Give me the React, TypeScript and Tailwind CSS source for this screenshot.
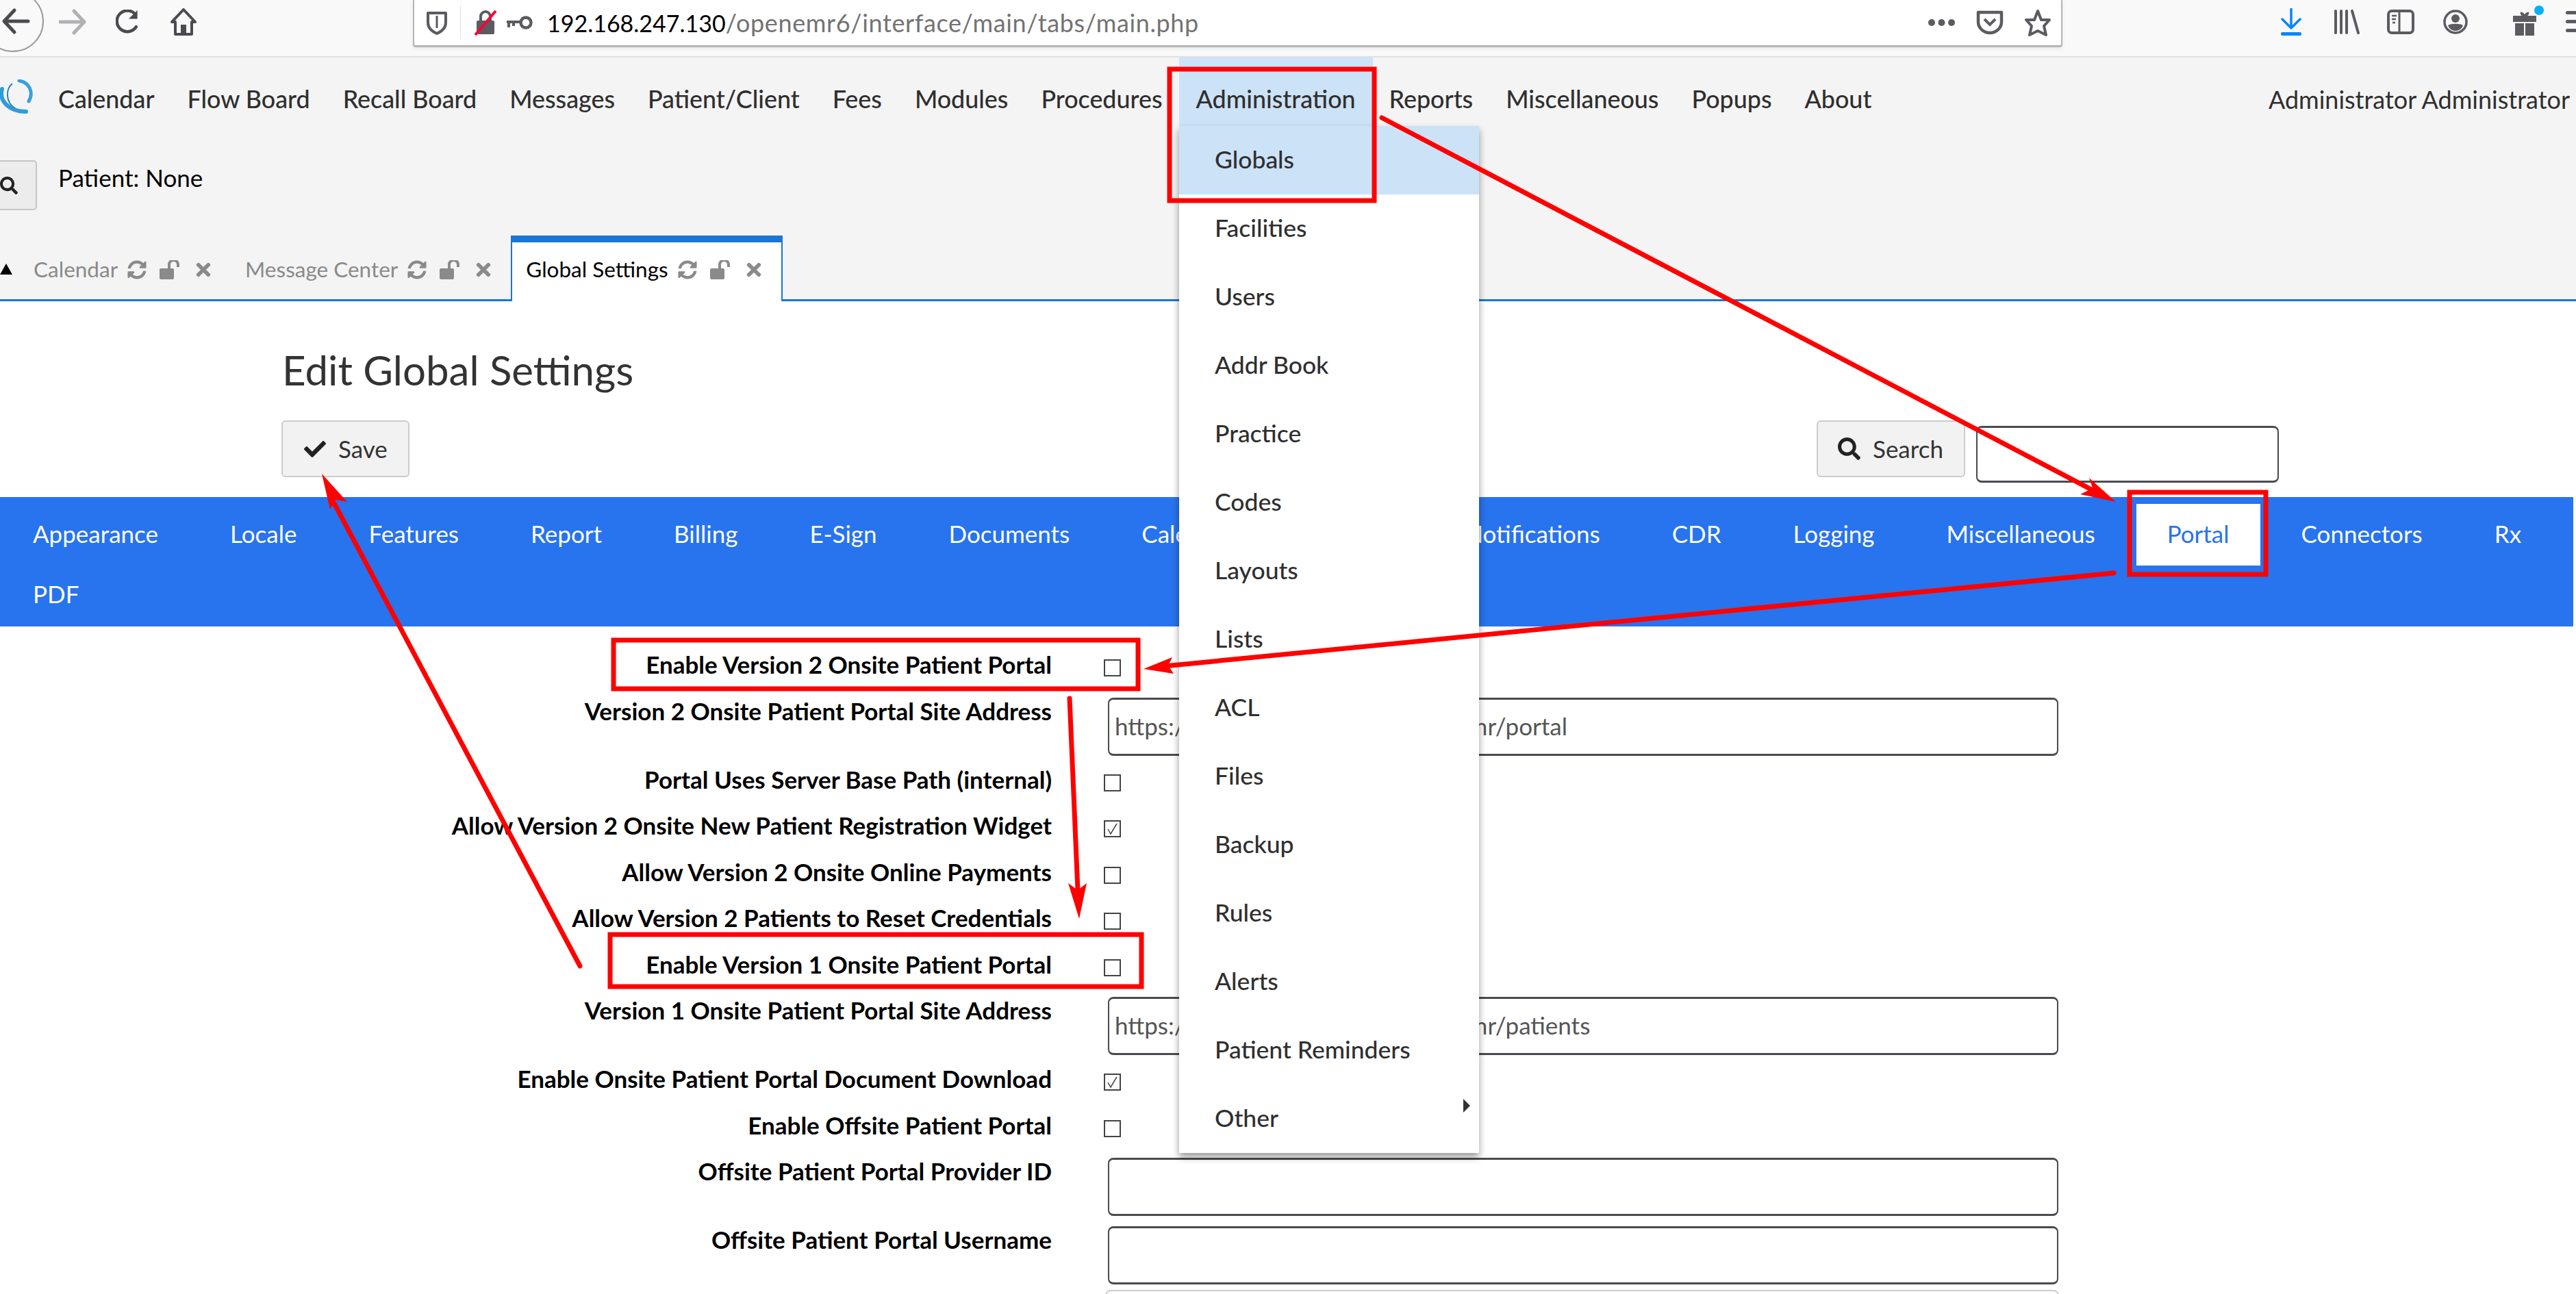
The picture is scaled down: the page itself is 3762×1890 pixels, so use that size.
import { FaCheck, FaSearch, FaSyncAlt, FaTimes } from "react-icons/fa";

const navItems = ["Calendar", "Flow Board", "Recall Board", "Messages", "Patient/Client", "Fees", "Modules", "Procedures"];
const navItemsAfter = ["Reports", "Miscellaneous", "Popups", "About"];
const menuItems = ["Globals", "Facilities", "Users", "Addr Book", "Practice", "Codes", "Layouts", "Lists", "ACL", "Files", "Backup", "Rules", "Alerts", "Patient Reminders", "Other"];
const settingTabs = ["Appearance", "Locale", "Features", "Report", "Billing", "E-Sign", "Documents", "Calendar", "Security", "Notifications", "CDR", "Logging", "Miscellaneous", "Portal", "Connectors", "Rx", "PDF"];

const Icon = ({ className, children, box = "0 0 40 40" }: { className: string; children: React.ReactNode; box?: string }) => (
  <svg viewBox={box} className={className} fill="none">
    {children}
  </svg>
);

const BrowserBar = () => (
  <div className="relative flex h-[84px] items-start overflow-hidden border-b-2 border-[#e0e0e2] bg-[#f9f9fa]">
    {/* back button is cut by the left edge */}
    <div className="ml-[-26px] mt-[-14px] flex h-[90px] w-[90px] shrink-0 items-center justify-center rounded-full border-2 border-[#9a9a9c] pl-[8px]">
      <Icon className="h-[40px] w-[42px]">
        <path d="M38 20H4M18 4 3 20l15 16" stroke="#4a4a4f" strokeWidth="5" strokeLinecap="round" strokeLinejoin="round" />
      </Icon>
    </div>
    <Icon className="ml-[22px] mt-[12px] h-[40px] w-[40px] shrink-0">
      <path d="M2 20h34M22 4l15 16-15 16" stroke="#b1b1b3" strokeWidth="5" strokeLinecap="round" strokeLinejoin="round" />
    </Icon>
    <Icon className="ml-[43px] mt-[14px] h-[36px] w-[38px] shrink-0">
      <path d="M31 8A17 17 0 1 0 32 28" stroke="#4a4a4f" strokeWidth="5" strokeLinecap="round" />
      <path d="M34 1v14H20z" fill="#4a4a4f" />
    </Icon>
    <Icon className="ml-[41px] mt-[12px] h-[40px] w-[40px] shrink-0">
      <path d="M20 2 3 20h5v18h24V20h5z" stroke="#4a4a4f" strokeWidth="4" strokeLinejoin="round" />
      <rect x="16" y="24" width="8" height="14" fill="#4a4a4f" />
    </Icon>
    <div className="ml-[315px] flex h-[69px] flex-[0_0_2409px] items-center rounded-b-[4px] border-x-2 border-b-[3px] border-[#b5b5b7] bg-white shadow-[0_2px_6px_rgba(0,0,0,0.08)]">
      <Icon className="ml-[18px] h-[36px] w-[30px] shrink-0" box="0 0 30 36">
        <path d="M2 4h26v14c0 8-6 13-13 16C8 31 2 26 2 18z" stroke="#5b5b60" strokeWidth="4" strokeLinejoin="round" />
        <path d="M15 8v18" stroke="#5b5b60" strokeWidth="3" />
      </Icon>
      <div className="ml-[19px] h-[50px] w-px bg-[#e2e2e4]" />
      <Icon className="ml-[19px] h-[38px] w-[34px] shrink-0" box="0 0 34 38">
        <path d="M10 16v-6a7 7 0 0 1 14 0v6" stroke="#5b5b60" strokeWidth="4" />
        <rect x="4" y="16" width="26" height="20" rx="2" fill="#5b5b60" />
        <path d="M2 37 32 2" stroke="#ff0039" strokeWidth="4" />
      </Icon>
      <Icon className="ml-[13px] h-[22px] w-[40px] shrink-0" box="0 0 40 22">
        <circle cx="29" cy="11" r="7.5" stroke="#5b5b60" strokeWidth="4.5" />
        <path d="M1 8h21v4H1zM2 10h4v8H2zM9 10h4v6H9z" fill="#5b5b60" />
      </Icon>
      <div className="ml-[20px] text-[36px] leading-none tracking-[0.63px] whitespace-nowrap text-[#737373]">
        <span className="text-[34px] tracking-normal text-black">192.168.247.130</span>/openemr6/interface/main/tabs/main.php
      </div>
      <div className="ml-auto flex items-center">
        <Icon className="h-[12px] w-[41px]" box="0 0 41 12">
          <circle cx="6" cy="6" r="5" fill="#5b5b60" />
          <circle cx="20.5" cy="6" r="5" fill="#5b5b60" />
          <circle cx="35" cy="6" r="5" fill="#5b5b60" />
        </Icon>
        <Icon className="ml-[30px] h-[36px] w-[40px]" box="0 0 40 36">
          <path d="M3 3h34v14c0 9-8 16-17 16S3 26 3 17z" stroke="#5b5b60" strokeWidth="4.5" strokeLinejoin="round" />
          <path d="M12 13l8 8 8-8" stroke="#5b5b60" strokeWidth="4" />
        </Icon>
        <Icon className="ml-[30px] mr-[14px] h-[40px] w-[40px]">
          <path d="M20 3l5 13h12l-8 9 3 13-12-6-12 6 3-13-8-9h12z" stroke="#5b5b60" strokeWidth="4" strokeLinejoin="round" />
        </Icon>
      </div>
    </div>
    <Icon className="ml-[318px] mt-[12px] h-[40px] w-[32px] shrink-0" box="0 0 32 40">
      <path d="M16 1v28M3 16l13 13 13-13" stroke="#0a84ff" strokeWidth="3.5" strokeLinecap="round" strokeLinejoin="round" />
      <rect x="1" y="35" width="30" height="5" rx="2" fill="#0a84ff" />
    </Icon>
    <Icon className="ml-[46px] mt-[14px] h-[36px] w-[38px] shrink-0" box="0 0 38 36">
      <path d="M3 2v32M11 2v32M19 2v32M27 2l9 32" stroke="#5b5b60" strokeWidth="4" strokeLinecap="round" />
    </Icon>
    <Icon className="ml-[40px] mt-[14px] h-[36px] w-[40px] shrink-0" box="0 0 40 36">
      <rect x="2" y="2" width="36" height="32" rx="5" stroke="#5b5b60" strokeWidth="4" />
      <path d="M18 2v32" stroke="#5b5b60" strokeWidth="3" />
      <path d="M7 9h7M7 14h6M8 19h4" stroke="#5b5b60" strokeWidth="2.5" />
    </Icon>
    <Icon className="ml-[42px] mt-[14px] h-[36px] w-[36px] shrink-0" box="0 0 36 36">
      <circle cx="18" cy="18" r="16" stroke="#5b5b60" strokeWidth="3.5" />
      <circle cx="18" cy="13" r="6" fill="#5b5b60" />
      <path d="M7 23c4-3 18-3 22 0-2 6-7 8-11 8s-9-2-11-8z" fill="#5b5b60" />
    </Icon>
    <div className="ml-[30px] h-[72px] w-px bg-[#dcdcde]" />
    <div className="relative ml-[35px] mt-[12px] shrink-0">
      <Icon className="h-[40px] w-[36px]" box="0 0 36 40">
        <path d="M18 9c-7-8-10 0-0 5 10-5 7-13 0-5z" fill="#5b5b60" />
        <path d="M1 11h34v9H1zM4 22h13v18H4zM19 22h13v18H19z" fill="#5b5b60" />
      </Icon>
      <div className="absolute right-[-10px] top-[-4px] h-[14px] w-[14px] rounded-full bg-[#0ab0f5]" />
    </div>
    <div className="ml-[42px] mt-[16px] flex shrink-0 flex-col gap-[8px]">
      <div className="h-[5px] w-[40px] rounded bg-[#5b5b60]" />
      <div className="h-[5px] w-[40px] rounded bg-[#5b5b60]" />
      <div className="h-[5px] w-[40px] rounded bg-[#5b5b60]" />
    </div>
  </div>
);

const TabControls = () => (
  <span className="ml-[14px] flex items-center text-[#8a8a8a]">
    <FaSyncAlt className="h-[28px] w-[28px]" />
    <Icon className="ml-[19px] h-[28px] w-[31px]" box="0 0 31 28">
      <rect x="0" y="12" width="21" height="16" rx="2" fill="currentColor" />
      <path d="M14 12V7a6 6 0 0 1 13-1v4" stroke="currentColor" strokeWidth="4" />
    </Icon>
    <FaTimes className="ml-[21px] h-[30px] w-[24px]" />
  </span>
);

const AppHeader = () => (
  <div className="flex h-[356px] flex-col bg-[#f4f4f4]">
    <div className="flex h-[100px] text-[35.85px] font-medium text-[#2f2f2f]">
      <Icon className="mt-[32px] h-[50px] w-[61px] shrink-0" box="0 0 61 50">
        <path d="M28 2C42 4 50 18 42 32" stroke="#39a0dc" strokeWidth="5" strokeLinecap="round" />
        <path d="M3 14C-2 32 14 47 38 47" stroke="#2f9bdc" strokeWidth="6" strokeLinecap="round" />
        <path d="M18 6C8 14 8 34 22 42" stroke="#2a7fb8" strokeWidth="2" />
      </Icon>
      {navItems.map((item) => (
        <div key={item} className="flex items-center whitespace-nowrap px-[24px] pt-[22px]">
          {item}
        </div>
      ))}
      <div className="flex items-center whitespace-nowrap bg-[#cce2f7] px-[25px] pt-[22px]">Administration</div>
      {navItemsAfter.map((item) => (
        <div key={item} className="flex items-center whitespace-nowrap px-[24px] pt-[22px]">
          {item}
        </div>
      ))}
      <div className="ml-auto flex items-center whitespace-nowrap pr-[9px] pt-[22px] text-[36px] font-normal">Administrator Administrator</div>
    </div>
    <div className="mt-[50px] flex h-[73px]">
      <div className="flex w-[54px] items-center rounded-r-[5px] border-y-2 border-r-2 border-[#c6c6c6] bg-[#ececec]">
        <FaSearch className="h-[26px] w-[26px] text-[#222]" />
      </div>
      <div className="ml-[31px] text-[35px] leading-[50px] text-black">Patient: None</div>
    </div>
    <div className="mt-[37px] flex h-[96px] items-stretch border-b-[3px] border-[#1976d2] text-[31.5px]">
      <div className="mt-[41px] h-0 w-0 border-x-[9px] border-b-[16px] border-x-transparent border-b-black" />
      <div className="ml-[9px] flex items-center px-[22px] pr-[27px] pt-[7px] text-[#8a8a8a]">
        Calendar
        <TabControls />
      </div>
      <div className="flex items-center px-[22px] pr-[28px] pt-[7px] text-[#8a8a8a]">
        Message Center
        <TabControls />
      </div>
      <div className="mb-[-3px] flex items-center border-x-2 border-t-[10px] border-[#1976d2] bg-white pl-[20px] pr-[28px] pb-[6px] text-black">
        Global Settings
        <TabControls />
      </div>
    </div>
  </div>
);

const Row = ({ label, children, tall }: { label: string; children?: React.ReactNode; tall?: boolean }) => (
  <div className={`flex ${tall ? "h-[100px]" : "h-[67.5px]"}`}>
    <div className="h-[65px] w-[1536px] shrink-0 text-right text-[35px] font-bold leading-[65px] text-black">{label}</div>
    {children}
  </div>
);

const CheckBox = ({ checked }: { checked?: boolean }) => (
  <div className="ml-[76px] mt-[25px] flex h-[25px] w-[25px] items-center justify-center border-2 border-[#444]">
    {checked && (
      <Icon className="h-[19px] w-[19px]" box="0 0 19 19">
        <path d="M3 10l4 7 9-15" stroke="#444" strokeWidth="1.5" />
      </Icon>
    )}
  </div>
);

const TextInput = ({ value }: { value?: string }) => (
  <input
    readOnly
    value={value ?? ""}
    className="ml-[82px] mt-[13px] h-[85px] w-[1388px] rounded-[8px] border-x-2 border-y-[3px] border-[#4a4a50] bg-white px-[8px] pb-[3px] text-[35px] text-[#555]"
  />
);

const SettingsPage = () => (
  <div>
    <h1 className="ml-[412px] mt-[70px] text-[60px] leading-[60px] text-[#333]">Edit Global Settings</h1>
    <div className="mt-[44px] flex h-[91px] items-start pl-[411px] pr-[434px]">
      <button className="flex h-[83px] w-[187px] items-center rounded-[6px] border-2 border-[#ccc] bg-[#f2f2f2] pl-[31px] text-[35px] text-[#333]">
        <FaCheck className="h-[32px] w-[32px] text-[#222]" />
        <span className="ml-[18px]">Save</span>
      </button>
      <button className="ml-auto flex h-[83px] w-[217px] items-center rounded-[6px] border-2 border-[#ccc] bg-[#f2f2f2] pl-[29px] text-[35px] text-[#333]">
        <FaSearch className="h-[33px] w-[33px] text-[#222]" />
        <span className="ml-[18px]">Search</span>
      </button>
      <input readOnly className="ml-[16px] mt-[8px] h-[83px] w-[442px] rounded-[8px] border-x-2 border-y-[3px] border-[#4a4a50] bg-white" />
    </div>
    <div className="mt-[21px] flex h-[189px] w-[3758px] flex-wrap content-start gap-x-[15px] bg-[#2873ee] pl-[3px] pt-[10px] text-[35px] text-white">
      {settingTabs.map((tab) =>
        tab === "Portal" ? (
          <div key={tab} className="mb-[-2px] flex h-[90px] items-center bg-white px-[45px] pb-[4px] text-[#2873ee]">
            {tab}
          </div>
        ) : (
          <div key={tab} className="mb-[-2px] flex h-[90px] items-center px-[45px] pb-[4px]">
            {tab}
          </div>
        ),
      )}
    </div>
    <div className="mt-[23px]">
      <Row label="Enable Version 2 Onsite Patient Portal"><CheckBox /></Row>
      <Row label="Version 2 Onsite Patient Portal Site Address" tall><TextInput value="https://your_web_site.com/openemr/portal" /></Row>
      <Row label="Portal Uses Server Base Path (internal)"><CheckBox /></Row>
      <Row label="Allow Version 2 Onsite New Patient Registration Widget"><CheckBox checked /></Row>
      <Row label="Allow Version 2 Onsite Online Payments"><CheckBox /></Row>
      <Row label="Allow Version 2 Patients to Reset Credentials"><CheckBox /></Row>
      <Row label="Enable Version 1 Onsite Patient Portal"><CheckBox /></Row>
      <Row label="Version 1 Onsite Patient Portal Site Address" tall><TextInput value="https://your_web_site.com/openemr/patients" /></Row>
      <Row label="Enable Onsite Patient Portal Document Download"><CheckBox checked /></Row>
      <Row label="Enable Offsite Patient Portal"><CheckBox /></Row>
      <Row label="Offsite Patient Portal Provider ID" tall><TextInput /></Row>
      <Row label="Offsite Patient Portal Username" tall><TextInput /></Row>
      <div className="ml-[1614px] mt-[6px] h-[40px] w-[1393px] rounded-[8px] border-2 border-[#ccc]" />
    </div>
  </div>
);

const AdminMenu = () => (
  <div className="absolute left-[1722px] top-[184px] w-[438px] bg-white text-[35.5px] font-medium text-[#2f2f2f] shadow-[0_6px_10px_rgba(0,0,0,0.4)]">
    {menuItems.map((item, i) => (
      <div key={item} className={`relative flex h-[100px] items-center pb-[2px] pl-[52px] ${i === 0 ? "bg-[#cce2f7]" : ""}`}>
        {item}
        {item === "Other" && (
          <div className="absolute right-[13px] top-[21px] h-0 w-0 border-y-[10px] border-l-[10px] border-y-transparent border-l-[#333]" />
        )}
      </div>
    ))}
  </div>
);

// the red marks someone drew over the screenshot
const Annotations = () => (
  <svg className="absolute left-0 top-0" width="3762" height="1890" viewBox="0 0 3762 1890" fill="none">
    <g stroke="#ff0000" strokeWidth="7">
      <rect x="1708" y="101" width="299" height="192" />
      <rect x="3110" y="719" width="199" height="120" />
      <rect x="896" y="935" width="766" height="71" />
      <rect x="891" y="1365" width="776" height="76" />
    </g>
    <g stroke="#ff0000" strokeWidth="7" strokeLinecap="round">
      <path d="M2018 172 3060 718" />
      <path d="M3087 837 1700 973" />
      <path d="M1562 1020 1574 1300" />
      <path d="M847 1411 488 735" />
    </g>
    <g fill="#ff0000">
      <polygon points="3090,733 3051,698 3056,713 3038,722" />
      <polygon points="1670,977 1712,960 1706,972 1714,984" />
      <polygon points="1576,1342 1560,1290 1574,1300 1587,1290" />
      <polygon points="470,692 482,744 490,730 507,733" />
    </g>
  </svg>
);

export default function App() {
  return (
    <div className="relative h-[1890px] w-[3762px] overflow-hidden bg-white font-[Lato,sans-serif]">
      <BrowserBar />
      <AppHeader />
      <SettingsPage />
      <AdminMenu />
      <Annotations />
    </div>
  );
}
